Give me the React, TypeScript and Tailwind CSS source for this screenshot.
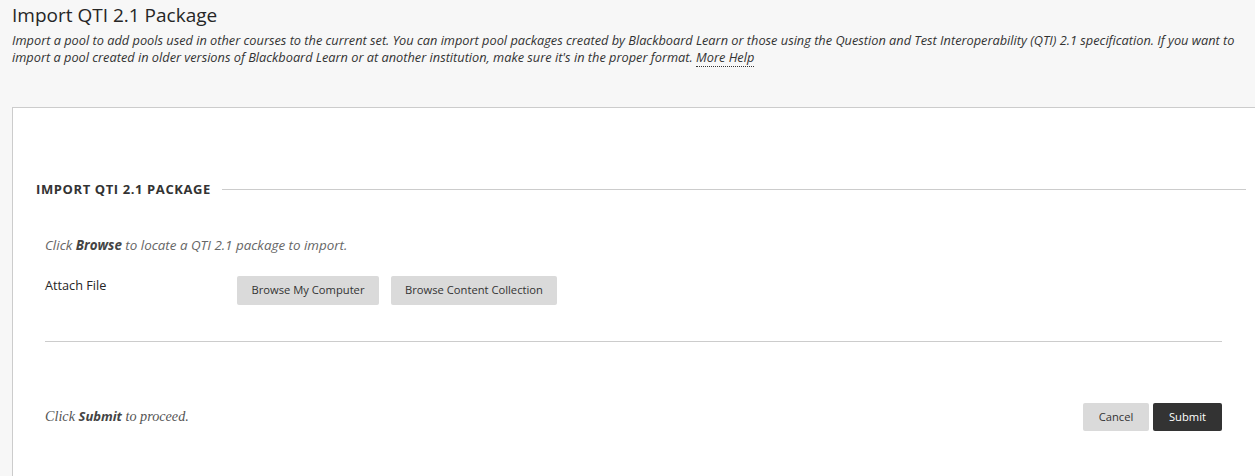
import React from "react";

export default function App() {
  const sans = { fontFamily: '"Open Sans", "Noto Sans", sans-serif' };
  return (
    <div className="w-[1255px] h-[476px] overflow-hidden bg-[#f7f7f7] text-[#262626]" style={sans}>
      <div className="pl-[12px] pr-[4px] pt-[2px]">
        <h1 className="text-[19px] leading-[26px] font-normal text-[#262626]">Import QTI 2.1 Package</h1>
        <p className="mt-[4px] text-[12.77px] leading-[17px] italic text-[#333]">
          Import a pool to add pools used in other courses to the current set. You can import pool packages created by Blackboard Learn or those using the Question and Test Interoperability (QTI) 2.1 specification. If you want to import a pool created in older versions of Blackboard Learn or at another institution, make sure it's in the proper format.{" "}
          <span className="border-b border-dotted border-[#333]">More Help</span>
        </p>
      </div>
      <div className="ml-[12px] mt-[41px] w-[1260px] h-[400px] bg-white border-l border-t border-[#cccccc]">
        <div className="pt-[72px] pl-[23px] flex items-center">
          <h2 className="text-[13px] font-bold text-[#333] leading-[18px] tracking-[0.6px]">IMPORT QTI 2.1 PACKAGE</h2>
          <div className="ml-[11px] w-[1024px] shrink-0 h-px bg-[#cccccc]" />
        </div>
        <div className="pl-[32px] pr-[20px]">
          <p className="mt-[38px] text-[13.4px] italic text-[#666] leading-[18px]">
            Click <span className="font-bold text-[#444]">Browse</span> to locate a QTI 2.1 package to import.
          </p>
          <div className="mt-[22px] flex items-start">
            <div className="w-[192px] text-[12.7px] leading-[18px] text-[#262626]">Attach File</div>
            <button className="h-[29px] w-[142px] rounded-[2px] bg-[#dadada] text-[11.2px] text-[#333]">Browse My Computer</button>
            <button className="ml-[12px] h-[29px] w-[166px] rounded-[2px] bg-[#dadada] text-[11.2px] text-[#333]">Browse Content Collection</button>
          </div>
          <div className="mt-[36px] w-[1177px] h-px bg-[#cccccc]" />
          <div className="mt-[61px] w-[1177px] flex items-center justify-between">
            <p className="text-[14.2px] italic text-[#555]" style={{ fontFamily: '"Liberation Serif", serif' }}>
              Click <span className="font-bold text-[13px] text-[#444]" style={sans}>Submit</span> to proceed.
            </p>
            <div className="flex gap-[4px]">
              <button className="h-[28px] w-[66px] rounded-[2px] bg-[#dadada] text-[11.2px] text-[#333]">Cancel</button>
              <button className="h-[28px] w-[69px] rounded-[2px] bg-[#333333] text-[11.2px] text-white">Submit</button>
            </div>
          </div>
        </div>
      </div>
    </div>
  );
}
